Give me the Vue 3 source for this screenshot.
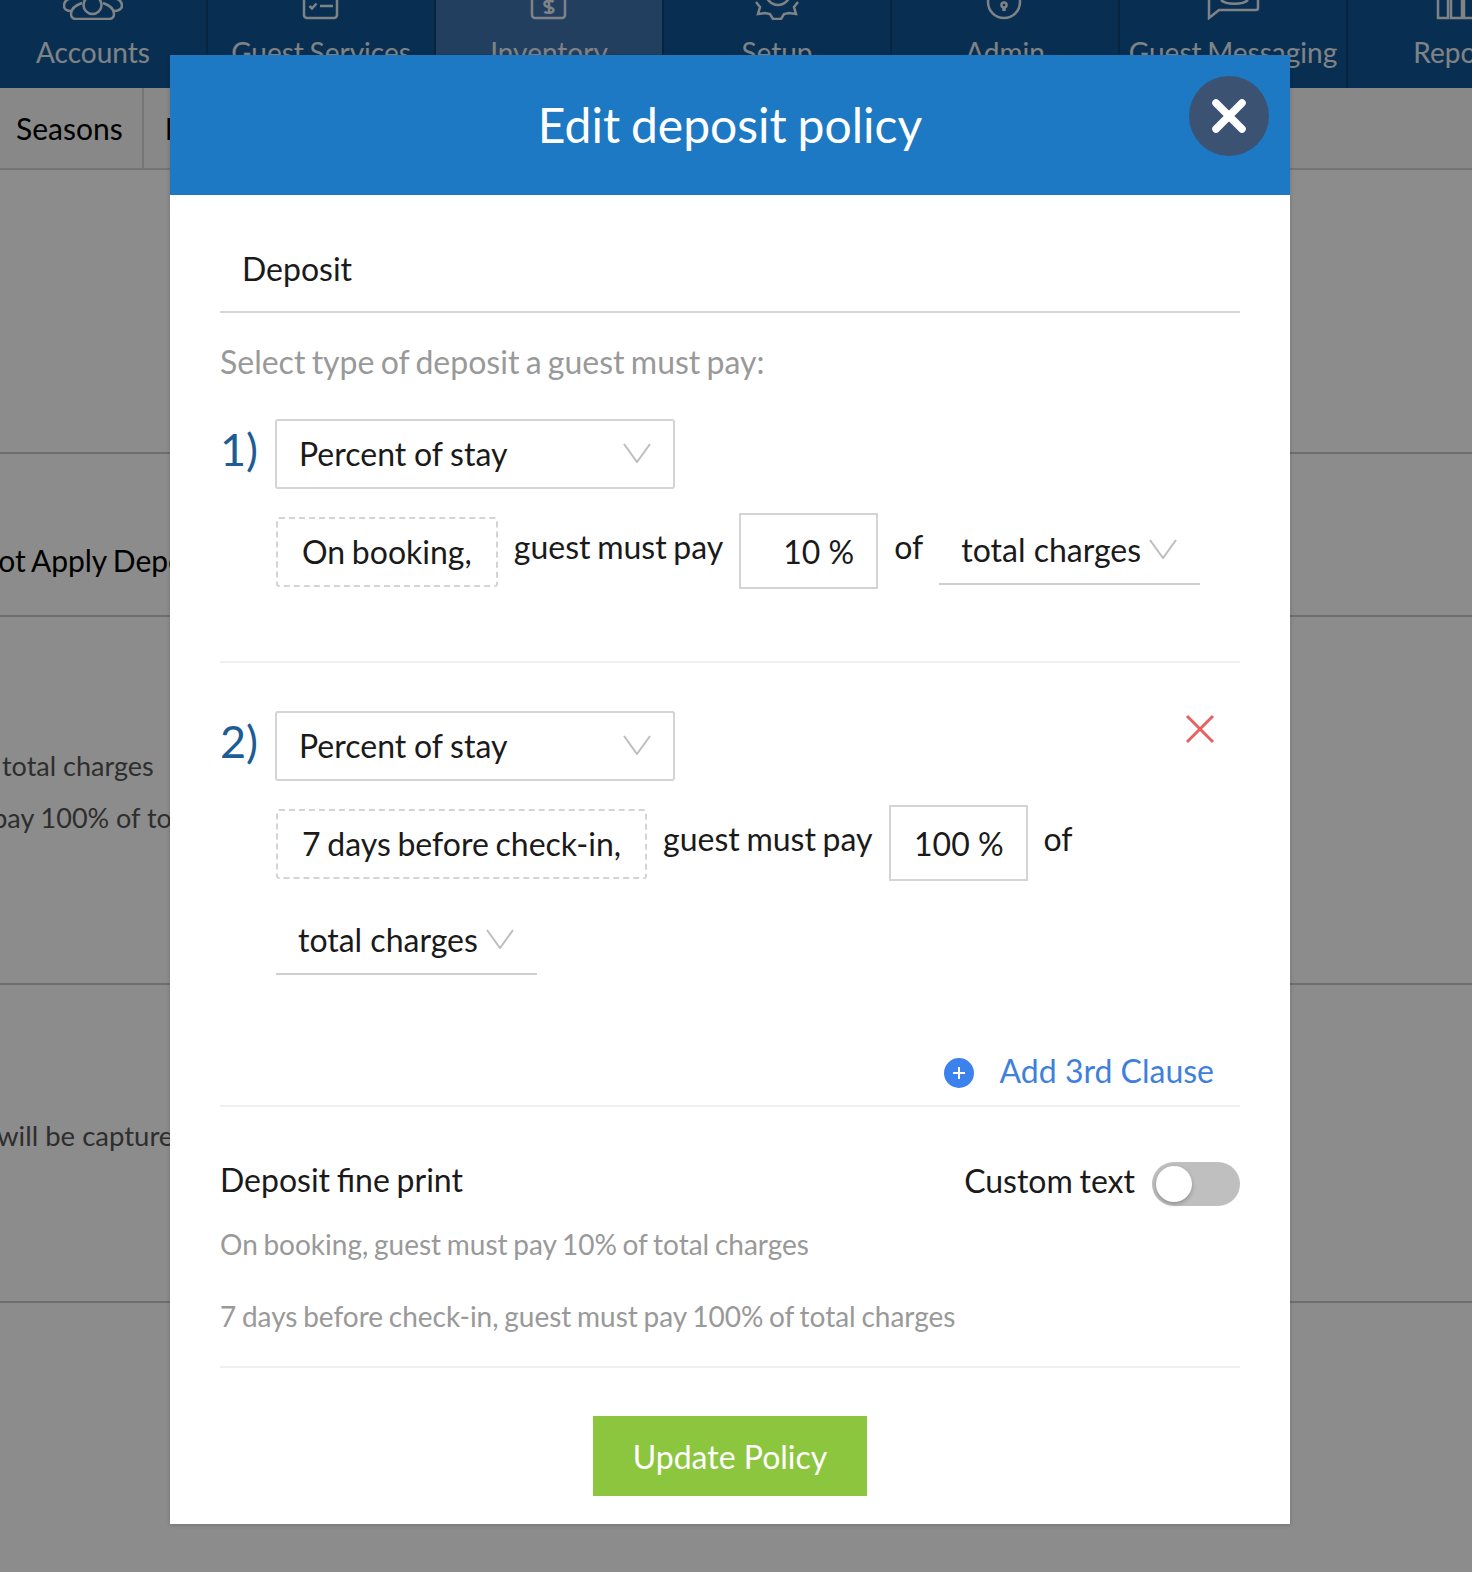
<script setup>
const navItems = [
  { label: "Accounts", icon: "accounts" },
  { label: "Guest Services", icon: "services" },
  { label: "Inventory", icon: "inventory", active: true },
  { label: "Setup", icon: "setup" },
  { label: "Admin", icon: "admin" },
  { label: "Guest Messaging", icon: "messaging" },
  { label: "Reports", icon: "reports" },
];
</script>

<template>
  <div class="page">
    <nav class="nav">
      <div v-for="item in navItems" :key="item.label" class="nav-item" :class="{ active: item.active }">
        <svg class="nav-icon" viewBox="0 0 60 40" fill="none" stroke="currentColor" stroke-width="2.500">
          <template v-if="item.icon === 'accounts'">
            <path d="M13 39h33c3 0 5-2 5-5 0-6-5-9-11-11M13 39c-3 0-5-2-5-5 0-6 5-9 11-11" />
            <circle cx="29.500" cy="25" r="9" />
            <path d="M8 31c-4 0-7-2-7-5 0-4 3-7 8-8M51 31c4 0 8-2 8-5 0-4-3-7-8-8" />
          </template>
          <template v-else-if="item.icon === 'services'">
            <rect x="13" y="-10" width="33" height="48" rx="3" />
            <path d="M18.500 26l2.500 2.500 4.500-5M29 26h13" />
          </template>
          <template v-else-if="item.icon === 'inventory'">
            <rect x="13" y="-10" width="33" height="48" rx="3" />
            <path d="M34.500 22c-1.500-2-9-2-9 2s9 2.500 9 6-7.500 3.500-9 1.500M30 18v16" />
          </template>
          <template v-else-if="item.icon === 'setup'">
            <path d="M9 22l4 5-2 7 7-1 5 1 3 5h8l3-5 5-1 7 1-2-7 4-5" />
            <circle cx="31" cy="13" r="12" />
          </template>
          <template v-else-if="item.icon === 'admin'">
            <circle cx="29" cy="22" r="16" />
            <circle cx="29" cy="25" r="2.500" />
            <path d="M29 27v4" stroke-width="3.500" />
          </template>
          <template v-else-if="item.icon === 'messaging'">
            <path d="M6 0v38l10-8h37a2 2 0 0 0 2-2V0" />
            <path d="M18 20c5 5 22 5 27 0" />
          </template>
          <template v-else>
            <path d="M7 -10h10v48H7zM20 -10h11v48H20zM33 -10h11v48H33z" />
          </template>
        </svg>
        <span class="nav-label">{{ item.label }}</span>
      </div>
    </nav>

    <div class="tabs">
      <span class="tab">Seasons</span>
      <span class="tab">Inventory</span>
    </div>
    <div class="bg-row bg-row-a"></div>
    <div class="bg-row bg-row-b"><span class="bg-strong">Do Not Apply Deposit</span></div>
    <div class="bg-row bg-row-c">
      <span class="bg-line bg-line-1">total charges</span>
      <span class="bg-line bg-line-2">guest must pay 100% of total charges</span>
    </div>
    <div class="bg-row bg-row-d"><span class="bg-line bg-line-3">will be captured</span></div>

    <div class="overlay"></div>

    <section class="modal">
      <header class="modal-head">
        <h1 class="modal-title">Edit deposit policy</h1>
        <button class="close-btn">
          <svg viewBox="0 0 36 36" width="36" height="36" fill="none" stroke="#fff" stroke-width="7.500" stroke-linecap="round">
            <path d="M5 5l26 26M31 5L5 31" />
          </svg>
        </button>
      </header>

      <div class="modal-body">
        <div class="deposit-tab"><span>Deposit</span></div>
        <p class="hint">Select type of deposit a guest must pay:</p>

        <div class="clause clause-one">
          <div class="clause-top">
            <span class="clause-num">1)</span>
            <div class="type-select">
              <span>Percent of stay</span>
              <svg class="chevron" viewBox="0 0 28 20" fill="none" stroke="#bdbdbd" stroke-width="2"><path d="M1 1l13 18L27 1" /></svg>
            </div>
          </div>
          <div class="clause-row">
            <div class="when-box">On booking,</div>
            <span class="row-text">guest must pay</span>
            <div class="pct-box">10 %</div>
            <span class="row-text">of</span>
            <div class="charge-select">
              <span>total charges</span>
              <svg class="chevron" viewBox="0 0 28 20" fill="none" stroke="#bdbdbd" stroke-width="2"><path d="M1 1l13 18L27 1" /></svg>
            </div>
          </div>
        </div>

        <div class="clause clause-two">
          <div class="clause-top">
            <span class="clause-num">2)</span>
            <div class="type-select">
              <span>Percent of stay</span>
              <svg class="chevron" viewBox="0 0 28 20" fill="none" stroke="#bdbdbd" stroke-width="2"><path d="M1 1l13 18L27 1" /></svg>
            </div>
            <svg class="remove" viewBox="0 0 30 30" fill="none" stroke="#e8605f" stroke-width="3"><path d="M2 2l26 26M28 2L2 28" /></svg>
          </div>
          <div class="clause-row">
            <div class="when-box">7 days before check-in,</div>
            <span class="row-text">guest must pay</span>
            <div class="pct-box">100 %</div>
            <span class="row-text">of</span>
            <div class="charge-select">
              <span>total charges</span>
              <svg class="chevron" viewBox="0 0 28 20" fill="none" stroke="#bdbdbd" stroke-width="2"><path d="M1 1l13 18L27 1" /></svg>
            </div>
          </div>
          <div class="add-row">
            <span class="add-icon">
              <svg viewBox="0 0 30 30" width="30" height="30"><circle cx="15" cy="15" r="15" fill="#3b82ec" /><path d="M15 9v12M9 15h12" stroke="#fff" stroke-width="2" /></svg>
            </span>
            <span class="add-text">Add 3rd Clause</span>
          </div>
        </div>

        <div class="fine">
          <div class="fine-head">
            <span class="fine-title">Deposit fine print</span>
            <div class="custom">
              <span class="custom-label">Custom text</span>
              <span class="toggle"><span class="knob"></span></span>
            </div>
          </div>
          <p class="fine-line fine-line-1">On booking, guest must pay 10% of total charges</p>
          <p class="fine-line fine-line-2">7 days before check-in, guest must pay 100% of total charges</p>
        </div>

        <div class="actions">
          <button class="update-btn">Update Policy</button>
        </div>
      </div>
    </section>
  </div>
</template>

<style>
html,
body {
  margin: 0;
  background: #fff;
}
</style>

<style scoped>
.page {
  position: relative;
  width: 1472px;
  height: 1572px;
  overflow: hidden;
  background: #fff;
  font-family: Lato, "Open Sans", sans-serif;
  font-size: 32px;
  word-spacing: -1.5px;
  color: #1a1a1a;
}

.nav {
  display: flex;
  height: 88px;
  margin-left: -20px;
  background: #0f5795;
}

.nav-item {
  flex: 0 0 228px;
  box-sizing: border-box;
  height: 88px;
  overflow: hidden;
  display: flex;
  flex-direction: column;
  align-items: center;
  justify-content: flex-end;
  padding-bottom: 18px;
  border-right: 2px solid #0c4476;
  color: #e9eef3;
}

.nav-item.active {
  background: #4074af;
}

.nav-icon {
  width: 60px;
  height: 40px;
  flex: none;
  margin-bottom: 14px;
}

.nav-label {
  font-size: 28px;
  line-height: 36px;
  white-space: nowrap;
  flex: none;
}

.tabs {
  display: flex;
  height: 80px;
  border-bottom: 2px solid #d4d4d4;
  background: #f7f7f7;
}

.tab {
  padding: 0 19px 0 16px;
  border-right: 2px solid #d8d8d8;
  font-size: 30px;
  line-height: 80px;
  color: #000;
}

.tab + .tab {
  padding-left: 21px;
}

.bg-row {
  box-sizing: border-box;
  border-bottom: 2px solid #c8c8c8;
  white-space: nowrap;
  position: relative;
}

.bg-row-a {
  height: 284px;
}

.bg-row-b {
  height: 163px;
  padding-top: 88px;
}

.bg-strong {
  display: block;
  margin-left: -70px;
  font-size: 30px;
  line-height: 36px;
  color: #000;
}

.bg-row-c {
  height: 368px;
  padding-top: 131px;
}

.bg-row-d {
  height: 318px;
  padding-top: 133px;
}

.bg-line {
  display: block;
  font-size: 27px;
  line-height: 36px;
  word-spacing: 0;
  color: #555;
}

.bg-line-1 {
  margin-left: 2px;
}

.bg-line-2 {
  margin-top: 16px;
  margin-left: -145px;
}

.bg-line-3 {
  margin-left: -3px;
  font-size: 27.500px;
}

.overlay {
  position: absolute;
  inset: 0;
  background: rgba(0, 0, 0, 0.45);
}

.modal {
  position: absolute;
  left: 170px;
  top: 55px;
  width: 1120px;
  height: 1469px;
  background: #fff;
  display: flex;
  flex-direction: column;
  box-shadow: 0 1px 4px rgba(0, 0, 0, 0.2);
}

.modal-head {
  position: relative;
  box-sizing: border-box;
  height: 140px;
  flex: none;
  padding-bottom: 2px;
  background: #1d79c4;
  display: flex;
  align-items: center;
  justify-content: center;
}

.modal-title {
  margin: 0;
  font-size: 48px;
  font-weight: 400;
  color: #fff;
}

.close-btn {
  position: absolute;
  right: 21px;
  top: 21px;
  width: 80px;
  height: 80px;
  border: none;
  border-radius: 50%;
  padding: 0;
  background: #3b5273;
  display: flex;
  align-items: center;
  justify-content: center;
}

.modal-body {
  padding: 0 50px;
  flex: 1;
  display: flex;
  flex-direction: column;
}

.deposit-tab {
  height: 118px;
  padding: 31px 22px 0;
  border-bottom: 2px solid #d6d6d6;
  box-sizing: border-box;
  display: flex;
  align-items: center;
  font-size: 32px;
}

.hint {
  margin: 29px 0 0;
  padding-bottom: 1px;
  font-size: 32px;
  line-height: 40px;
  word-spacing: -1.9px;
  color: #999;
}

.clause-one {
  margin-top: 36px;
  padding-bottom: 72px;
  border-bottom: 2px solid #efefef;
}

.clause-two {
  margin-top: 48px;
  border-bottom: 2px solid #efefef;
}

.clause-top {
  display: flex;
  align-items: flex-start;
  position: relative;
}

.clause-num {
  width: 55px;
  flex: none;
  font-size: 45px;
  line-height: 60px;
  color: #1d5c94;
}

.type-select {
  box-sizing: border-box;
  width: 400px;
  height: 70px;
  padding: 0 22px 2px;
  border: 2px solid #d4d4d4;
  border-radius: 3px;
  display: flex;
  align-items: center;
  justify-content: space-between;
  font-size: 32px;
  word-spacing: -0.5px;
}

.chevron {
  width: 28px;
  height: 20px;
  flex: none;
}

.remove {
  position: absolute;
  right: 25px;
  top: 3px;
  width: 30px;
  height: 30px;
}

.clause-row {
  display: flex;
  flex-wrap: wrap;
  align-items: flex-start;
  column-gap: 16px;
  margin-top: 24px;
  padding-left: 56px;
}

.when-box {
  box-sizing: border-box;
  height: 70px;
  margin-top: 4px;
  padding: 0 24px 2px;
  border: 2px dashed #d4d4d4;
  border-radius: 3px;
  display: flex;
  align-items: center;
  font-size: 32px;
}

.row-text {
  font-size: 32px;
  line-height: 68px;
}

.pct-box {
  box-sizing: border-box;
  width: 139px;
  height: 76px;
  padding-right: 22px;
  border: 2px solid #d4d4d4;
  display: flex;
  align-items: center;
  justify-content: flex-end;
  font-size: 32px;
  word-spacing: 0;
}

.charge-select {
  box-sizing: border-box;
  width: 261px;
  height: 72px;
  padding: 2px 0 0 22px;
  border-bottom: 2px solid #cfcfcf;
  display: flex;
  align-items: center;
  gap: 8px;
  font-size: 32px;
  word-spacing: 0;
}

.clause-two .charge-select {
  margin-top: 22px;
}

.add-row {
  height: 53px;
  margin-top: 77px;
  padding-right: 26px;
  display: flex;
  align-items: flex-start;
  justify-content: flex-end;
}

.add-icon {
  height: 30px;
  margin: 4px 26px 0 0;
}

.add-text {
  font-size: 32px;
  line-height: 38px;
  word-spacing: 0;
  color: #3f80dd;
}

.fine {
  padding-bottom: 32px;
  border-bottom: 2px solid #efefef;
}

.fine-head {
  margin-top: 53px;
  display: flex;
  align-items: center;
  justify-content: space-between;
  font-size: 32px;
}

.fine-title {
  padding-bottom: 8px;
}

.custom {
  display: flex;
  align-items: center;
  gap: 17px;
}

.custom-label {
  padding-bottom: 6px;
}

.toggle {
  position: relative;
  width: 88px;
  height: 44px;
  border-radius: 22px;
  background: #bfbfbf;
  display: block;
}

.knob {
  position: absolute;
  left: 4px;
  top: 4px;
  width: 36px;
  height: 36px;
  border-radius: 50%;
  background: #fff;
  box-shadow: 0 2px 4px rgba(0, 0, 0, 0.25);
}

.fine-line {
  margin: 0;
  font-size: 28px;
  line-height: 36px;
  color: #999;
}

.fine-line-1 {
  margin-top: 19px;
}

.fine-line-2 {
  margin-top: 36px;
}

.actions {
  display: flex;
  justify-content: center;
  padding-top: 48px;
}

.update-btn {
  width: 274px;
  height: 80px;
  border: none;
  background: #8cc63f;
  color: #fff;
  font-family: inherit;
  font-size: 32px;
  padding: 0;
}
</style>
